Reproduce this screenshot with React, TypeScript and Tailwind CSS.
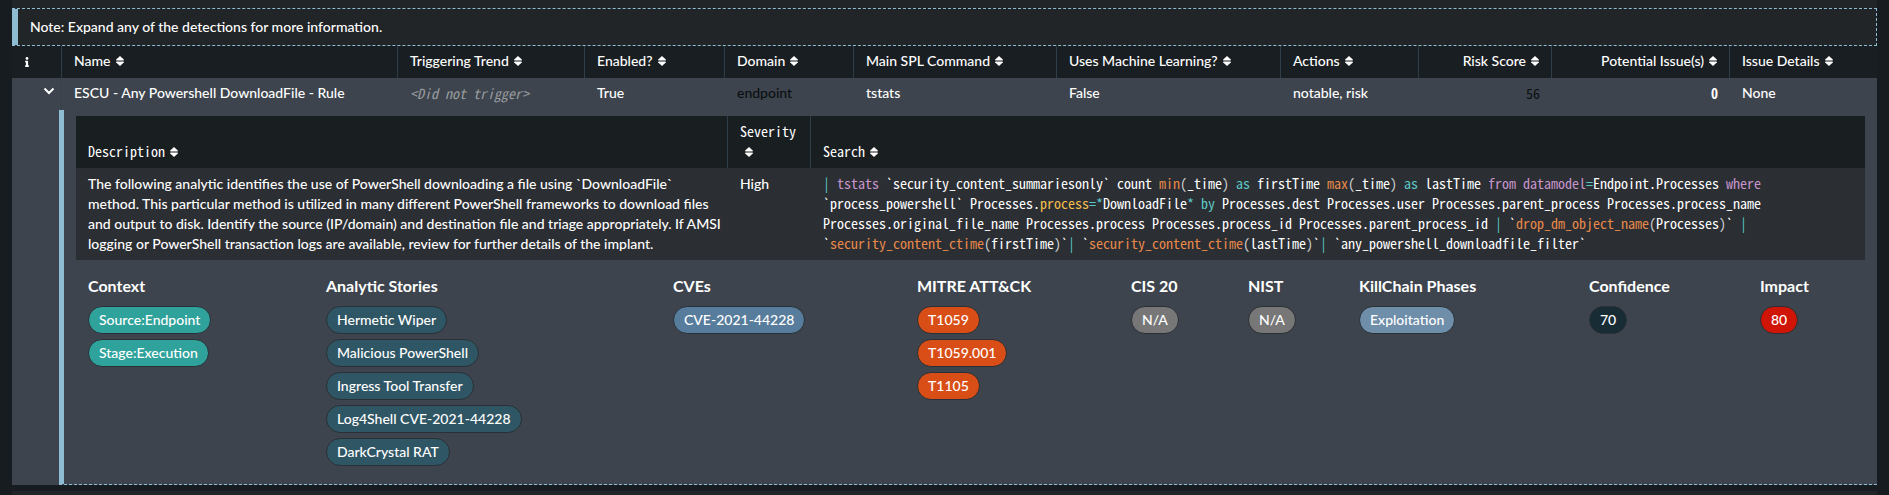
import type { ReactNode } from "react";
import { FaInfo } from "react-icons/fa";

const mono = "font-['Noto_Sans_Mono_CJK_SC','Liberation_Mono',monospace]";

function SortIcon() {
  return (
    <svg
      viewBox="0 0 8 10"
      className="ml-[5px] inline-block h-[10px] w-[8px] align-baseline"
      fill="currentColor"
      aria-hidden="true"
    >
      <path d="M4 0 7.8 3.6Q8.1 4.3 7.4 4.4H.6Q-.1 4.3.2 3.6Z" />
      <path d="M4 10 7.8 6.4Q8.1 5.7 7.4 5.6H.6Q-.1 5.7.2 6.4Z" />
    </svg>
  );
}

type Column = { label: string; width: string; right?: boolean };

const columns: Column[] = [
  { label: "Name", width: "w-[336px]" },
  { label: "Triggering Trend", width: "w-[187px]" },
  { label: "Enabled?", width: "w-[140px]" },
  { label: "Domain", width: "w-[129px]" },
  { label: "Main SPL Command", width: "w-[203px]" },
  { label: "Uses Machine Learning?", width: "w-[224px]" },
  { label: "Actions", width: "w-[138px]" },
  { label: "Risk Score", width: "w-[133px]", right: true },
  { label: "Potential Issue(s)", width: "w-[178px]", right: true },
  { label: "Issue Details", width: "w-[147px]" },
];

function Op({ children }: { children: ReactNode }) {
  return <span className="text-[#5cc8c4]">{children}</span>;
}
function Cmd({ children }: { children: ReactNode }) {
  return <span className="text-[#c795cb]">{children}</span>;
}
function Fn({ children }: { children: ReactNode }) {
  return <span className="text-[#e8894a]">{children}</span>;
}
function Par({ children }: { children: ReactNode }) {
  return <span className="text-[#cfd1d3]">{children}</span>;
}

type Group = { title: string; color: string; tags: string[] };

const groups: Group[] = [
  { title: "Context", color: "bg-[#2fa39b]", tags: ["Source:Endpoint", "Stage:Execution"] },
  {
    title: "Analytic Stories",
    color: "bg-[#2f5664]",
    tags: [
      "Hermetic Wiper",
      "Malicious PowerShell",
      "Ingress Tool Transfer",
      "Log4Shell CVE-2021-44228",
      "DarkCrystal RAT",
    ],
  },
  { title: "CVEs", color: "bg-[#577c9c]", tags: ["CVE-2021-44228"] },
  { title: "MITRE ATT&CK", color: "bg-[#d94e17]", tags: ["T1059", "T1059.001", "T1105"] },
  { title: "CIS 20", color: "bg-[#777777]", tags: ["N/A"] },
  { title: "NIST", color: "bg-[#777777]", tags: ["N/A"] },
  { title: "KillChain Phases", color: "bg-[#6f8eaa]", tags: ["Exploitation"] },
  { title: "Confidence", color: "bg-[#182c36]", tags: ["70"] },
  { title: "Impact", color: "bg-[#d01405]", tags: ["80"] },
];

function SearchQuery() {
  return (
    <code className={`${mono} text-sm/5 font-normal`}>
      <Op>|</Op> <Cmd>tstats</Cmd> `security_content_summariesonly` count <Fn>min</Fn>
      <Par>(</Par>_time<Par>)</Par> <Op>as</Op> firstTime <Fn>max</Fn>
      <Par>(</Par>_time<Par>)</Par> <Op>as</Op> lastTime <Cmd>from</Cmd> <Cmd>datamodel</Cmd>
      <Op>=</Op>Endpoint.Processes <Cmd>where</Cmd> `process_powershell` Processes.
      <span className="text-[#f3bf4c]">process</span>
      <Op>=*</Op>DownloadFile<Op>*</Op> <Op>by</Op> Processes.dest Processes.user
      Processes.parent_process Processes.process_name Processes.original_file_name
      Processes.process Processes.process_id Processes.parent_process_id <Op>|</Op> `
      <Fn>drop_dm_object_name</Fn>
      <Par>(</Par>Processes<Par>)</Par>` <Op>|</Op> `<Fn>security_content_ctime</Fn>
      <Par>(</Par>firstTime<Par>)</Par>`<Op>|</Op> `<Fn>security_content_ctime</Fn>
      <Par>(</Par>lastTime<Par>)</Par>`<Op>|</Op> `any_powershell_downloadfile_filter`
    </code>
  );
}

function DetailTable() {
  const th = "border-r border-[#2e3d47] px-3 pt-[5px] pb-[7px] text-left align-bottom font-normal last:border-r-0";
  return (
    <table className={`w-full table-fixed border-separate border-spacing-0 ${mono}`}>
      <thead className="bg-[#191e21]">
        <tr>
          <th className={`w-[652px] ${th}`}>
            <button type="button" className="text-left">Description<SortIcon /></button>
          </th>
          <th className={`w-[83px] ${th}`}>
            <button type="button" className="text-left">Severity <SortIcon /></button>
          </th>
          <th className={`w-[1054px] ${th}`}>
            <button type="button" className="text-left">Search<SortIcon /></button>
          </th>
        </tr>
      </thead>
      <tbody className="bg-[#2b2e33]">
        <tr className="align-top">
          <td className="py-1.5 pr-1.5 pl-3 font-['Lato',sans-serif]">
            The following analytic identifies the use of PowerShell downloading a file using
            `DownloadFile` method. This particular method is utilized in many different PowerShell
            frameworks to download files and output to disk. Identify the source (IP/domain) and
            destination file and triage appropriately. If AMSI logging or PowerShell transaction
            logs are available, review for further details of the implant.
          </td>
          <td className="px-3 py-1.5 font-['Lato',sans-serif]">High</td>
          <td className="px-3 pt-[5px] pb-[7px]">
            <SearchQuery />
          </td>
        </tr>
      </tbody>
    </table>
  );
}

function TagGroups() {
  return (
    <div className="grid grid-cols-[238fr_347fr_244fr_214fr_117fr_111fr_230fr_171fr_105fr] pt-4 pb-[18px] pl-3">
      {groups.map((g) => (
        <section key={g.title}>
          <h3 className="text-base/5 font-bold whitespace-nowrap">{g.title}</h3>
          <ul className="mt-2.5 flex flex-col items-start gap-[5px]">
            {g.tags.map((t) => (
              <li
                key={t}
                className={`h-7 rounded-full border border-[#2a3036] px-2.5 leading-[26px] whitespace-nowrap ${g.color}`}
              >
                {t}
              </li>
            ))}
          </ul>
        </section>
      ))}
    </div>
  );
}

export default function App() {
  const cell = "px-3 pt-[5px] pb-[7px]";
  return (
    <main className="min-h-screen bg-[#171c20] px-3 font-['Lato',sans-serif] text-sm/5 font-medium text-white">
      <div className="h-2 bg-[#212527]" />
      <p className="border border-l-[6px] border-dashed border-[#8ebdd3] bg-[#212527] px-3 py-2 [border-left-style:solid]">
        Note: Expand any of the detections for more information.
      </p>
      <table className="w-full table-fixed border-separate border-spacing-0">
        <thead className="bg-[#191e22]">
          <tr>
            <th className="w-[50px] border-r border-[#2e3d47] px-2.5 py-1.5 text-left">
              <FaInfo className="size-[10px]" aria-label="Info" />
            </th>
            {columns.map((c) => (
              <th
                key={c.label}
                className={`border-r border-[#2e3d47] px-3 pt-[5px] pb-[7px] font-medium whitespace-nowrap last:border-r-0 ${c.width} ${c.right ? "text-right" : "text-left"}`}
              >
                <button type="button">{c.label}<SortIcon /></button>
              </th>
            ))}
          </tr>
        </thead>
        <tbody className="bg-[#3d444d]">
          <tr className="align-top">
            <td className="border-r border-[#36434d] py-[9px] pr-[6px] text-right">
              <button type="button" aria-label="Collapse row" aria-expanded="true" className="ml-auto block">
                <svg viewBox="0 0 12 8" className="h-2 w-3" fill="none" stroke="currentColor" strokeWidth="2">
                  <path d="M1.5 1.5 6 6l4.500-4.500" />
                </svg>
              </button>
            </td>
            <td className={cell}>ESCU - Any Powershell DownloadFile - Rule</td>
            <td className={`${cell} ${mono} font-normal text-[#999c9f] italic`}>&lt;Did not trigger&gt;</td>
            <td className={cell}>True</td>
            <td className={`${cell} text-[#0c0f11]`}>endpoint</td>
            <td className={cell}>tstats</td>
            <td className={cell}>False</td>
            <td className={cell}>notable, risk</td>
            <td className={`${cell} ${mono} text-right font-normal text-[#0c0f11]`}>56</td>
            <td className={`${cell} ${mono} text-right font-bold`}>0</td>
            <td className={cell}>None</td>
          </tr>
          <tr>
            <td colSpan={11} className="pl-[47px]">
              <div className="border-b border-l-[5px] border-dashed border-[#8ebdd3] px-3 pt-1.5 [border-left-style:solid]">
                <DetailTable />
                <TagGroups />
              </div>
            </td>
          </tr>
        </tbody>
      </table>
      <div className="mt-1.5 h-1 bg-[#222528]" />
    </main>
  );
}
